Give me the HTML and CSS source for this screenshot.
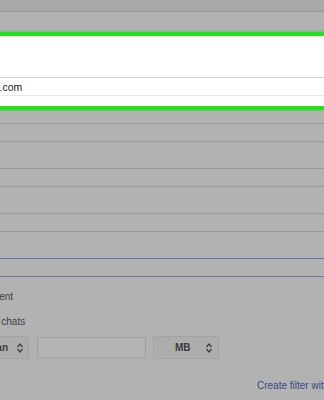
FILE: index.html
```html
<!DOCTYPE html>
<html>
<head>
    <title>Search options</title>
    <link rel="stylesheet" href="styles.css">
</head>
<body>
<div class="page">
    <div class="toolbar"></div>

    <div class="dialog">
        <div class="highlight">
            <div class="field field-light"><span class="field-text">someone@example.com</span></div>
        </div>

        <div class="fields">
            <div class="field"></div>
            <div class="field"></div>
            <div class="field"></div>
            <div class="field field-focus"></div>
        </div>

        <div class="options">
            <div class="option">Has attachment</div>
            <div class="option option-chats">Don't include chats</div>
        </div>

        <div class="size-row">
            <div class="select select-compare">
                <span>greater than</span>
                <svg class="arrows" width="6" height="10" viewBox="0 0 6 10"><path d="M0.5 4 L3 1 L5.5 4 M0.5 6 L3 9 L5.5 6" fill="none" stroke="#3a3a3a" stroke-width="1.2"/></svg>
            </div>
            <div class="size-input"></div>
            <div class="select select-unit">
                <span>MB</span>
                <svg class="arrows" width="6" height="10" viewBox="0 0 6 10"><path d="M0.5 4 L3 1 L5.5 4 M0.5 6 L3 9 L5.5 6" fill="none" stroke="#3a3a3a" stroke-width="1.2"/></svg>
            </div>
        </div>

        <div class="actions">
            <a class="create-link">Create filter with this search</a>
        </div>
    </div>
</div>
</body>
</html>
```

FILE: styles.css
```css
:root {
    --overlay-bg: #b2b2b2;
    --toolbar-bg: #a8a8a8;
    --line-color: #9a9a9a;
    --focus-color: #6b76a0;
    --green: #1fe31f;
    --text-color: #3f3f3f;
    --link-color: #3a4784;
}

html, body {
    margin: 0;
    height: 100%;
    overflow: hidden;
}

body {
    font-family: "Liberation Sans", Arial, sans-serif;
    font-size: 10px;
    background-color: var(--overlay-bg);
    color: var(--text-color);
}

.page {
    width: 324px;
}

.toolbar {
    height: 11px;
    background-color: var(--toolbar-bg);
    border-bottom: 1px solid #9c9c9c;
}

.dialog {
    padding-top: 20px;
}

.highlight {
    background-color: #ffffff;
    border-top: 4px solid var(--green);
    border-bottom: 4px solid var(--green);
    padding: 41px 0 10px 0;
    box-shadow: 0 -1px 1px rgba(31, 227, 31, 0.4), 0 1px 1px rgba(31, 227, 31, 0.4);
}

.field {
    height: 19px;
    box-sizing: border-box;
    margin: 0 -10px;
    border-top: 1px solid var(--line-color);
    border-bottom: 1px solid var(--line-color);
}

.field-light {
    border-top-color: #cfcfcf;
    border-bottom-color: #e6e6e6;
    display: flex;
    align-items: center;
}

.field-text {
    font-size: 10.5px;
    color: #222222;
    margin-left: -84px;
}

.field-focus {
    border-color: var(--focus-color);
}

.fields {
    display: flex;
    flex-direction: column;
    gap: 26px;
    padding-top: 13px;
}

.options {
    margin-top: 7px;
    margin-left: -57px;
    white-space: nowrap;
}

.option {
    line-height: 25px;
}

.option-chats {
    margin-left: -2px;
}

.size-row {
    display: flex;
    gap: 8px;
    margin-top: 2px;
    margin-left: -51px;
}

.select {
    height: 23px;
    box-sizing: border-box;
    display: flex;
    align-items: center;
    justify-content: space-between;
    background-color: #adadad;
    border: 1px solid #a3a3a3;
    border-radius: 2px;
    font-weight: bold;
    color: #3a3a3a;
}

.select-compare {
    width: 80px;
    padding: 0 5px 0 0;
    white-space: nowrap;
    justify-content: flex-end;
    gap: 9px;
}

.select-unit {
    width: 66px;
    padding: 0 6px 0 21px;
    margin-left: -1px;
}

.size-input {
    width: 109px;
    height: 21px;
    margin-top: 1px;
    box-sizing: border-box;
    border: 1px solid #a0a0a0;
    background-color: #b4b4b4;
}

.actions {
    margin-top: 19px;
    padding-left: 257px;
    white-space: nowrap;
    line-height: 16px;
}

.create-link {
    color: var(--link-color);
}
```
